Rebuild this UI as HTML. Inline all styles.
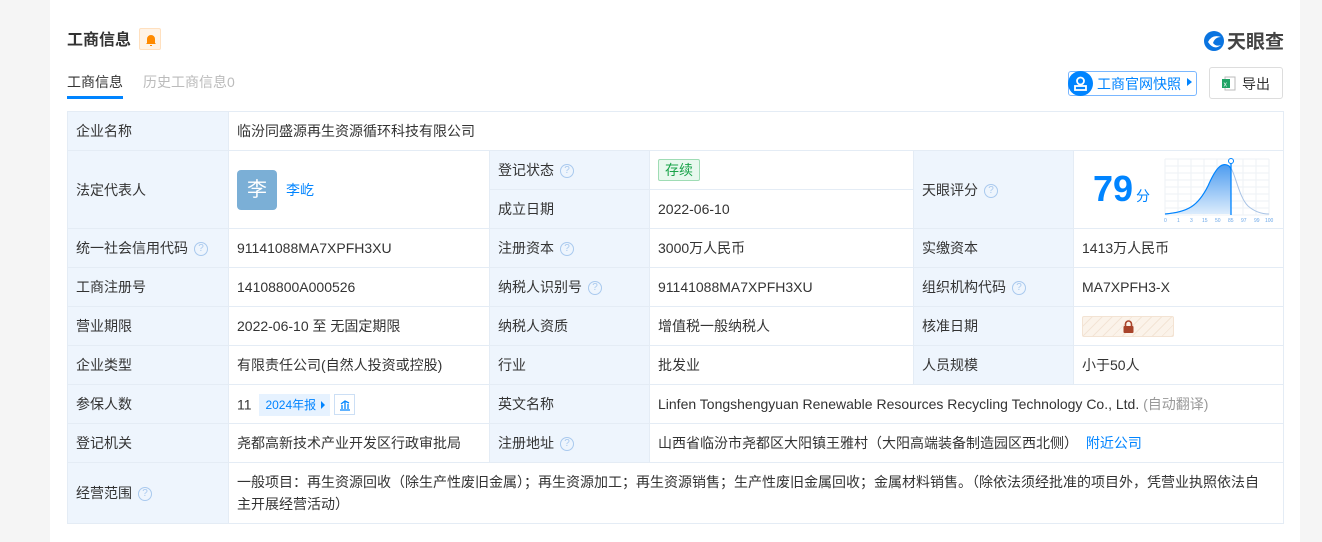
<!DOCTYPE html>
<html><head><meta charset="utf-8">
<style>
*{box-sizing:border-box;margin:0;padding:0}
body{width:1322px;height:542px;background:#f5f5f5;font-family:"Liberation Sans","Noto Sans CJK SC",sans-serif;font-size:14px;color:#333;position:relative;overflow:hidden}
.card{position:absolute;left:50px;top:0;width:1250px;height:542px;background:#fff}
.title{position:absolute;left:67px;top:26px;font-size:16px;font-weight:bold;color:#333}
.bell{position:absolute;left:139px;top:28px;width:22px;height:22px;background:#fff3e6;border:1px solid #ffe0bf;border-radius:2px}
.tab1{position:absolute;left:67px;top:72px;font-size:14px;color:#333}
.tabline{position:absolute;left:67px;top:96px;width:56px;height:3px;background:#0084ff}
.tab2{position:absolute;left:143px;top:72px;color:#bbb}
.logo{position:absolute;left:1203px;top:27px;font-size:19px;font-weight:bold;color:#444;display:flex;align-items:center;gap:2px}
.snap{position:absolute;left:1068px;top:71px;width:129px;height:25px;border:1px solid #7ab7ff;border-radius:3px;color:#0084ff;font-size:14px}
.snap .ic{position:absolute;left:-1px;top:-1px;width:25px;height:25px;border-radius:50%;background:#0084ff}
.exp{position:absolute;left:1209px;top:67px;width:74px;height:32px;border:1px solid #ddd;border-radius:3px;font-size:14px}
table{position:absolute;left:67px;top:111px;width:1216px;border-collapse:collapse;table-layout:fixed}
td{border:1px solid #e4ecf5;padding:0 8px;height:39px;vertical-align:middle;line-height:22px}
td.l{background:#eef5fd;color:#333}
.q{display:inline-block;width:14px;height:14px;border:1px solid #a9c9ee;border-radius:50%;color:#a9c9ee;font-size:10px;line-height:12px;text-align:center;vertical-align:middle;margin-left:6px}
a{color:#0084ff;text-decoration:none}
</style></head><body>
<div class="card"></div>
<div class="title">工商信息</div>
<div class="bell"><svg width="22" height="22" viewBox="0 0 22 22"><path d="M7 14 V10 a4 4 0 0 1 8 0 V14 L16 15 H6 Z M10 16 h2 v1 h-2z" fill="#ff8a00"/></svg></div>
<div class="tab1">工商信息</div><div class="tabline"></div>
<div class="tab2">历史工商信息0</div>
<div class="logo"><svg width="22" height="22" viewBox="0 0 22 22"><circle cx="11" cy="11" r="10" fill="#0a74e0"/><path d="M5 12 q4 -8 13 -5 q-6 0 -8 6 q3 4 8 2 q-7 6 -13 -3z" fill="#fff"/></svg><span>天眼查</span></div>
<div class="snap"><div class="ic"><svg width="25" height="25" viewBox="0 0 25 25"><circle cx="12.5" cy="10" r="3.5" fill="none" stroke="#fff" stroke-width="1.8"/><rect x="7" y="15" width="11" height="4" fill="none" stroke="#fff" stroke-width="1.8"/></svg></div><span style="position:absolute;left:28px;top:2px">工商官网快照</span><span style="position:absolute;right:4px;top:6px;width:0;height:0;border-left:5px solid #0084ff;border-top:4px solid transparent;border-bottom:4px solid transparent"></span></div>
<div class="exp"><svg style="position:absolute;left:12px;top:8px" width="14" height="15" viewBox="0 0 14 15"><rect x="3" y="1" width="10" height="13" fill="#fff" stroke="#bbb"/><rect x="0" y="3" width="8" height="9" fill="#21a366"/><text x="1.5" y="10.5" font-size="7" fill="#fff" font-family="Liberation Sans">x</text></svg><span style="position:absolute;left:32px;top:6px">导出</span></div>
<table>
<colgroup><col style="width:161px"><col style="width:261px"><col style="width:160px"><col style="width:264px"><col style="width:160px"><col style="width:210px"></colgroup>
<tr><td class="l">企业名称</td><td colspan="5">临汾同盛源再生资源循环科技有限公司</td></tr>
<tr><td class="l" rowspan="2">法定代表人</td><td rowspan="2"><span style="display:inline-block;width:40px;height:40px;background:#7bafd6;border-radius:4px;color:#fff;font-size:20px;text-align:center;line-height:40px;vertical-align:middle">李</span><a style="margin-left:9px;vertical-align:middle">李屹</a></td><td class="l">登记状态<span class="q">?</span></td><td><span style="display:inline-block;border:1px solid #9fdcb4;background:#e8f8ee;color:#1aa34a;padding:0 6px;line-height:20px;border-radius:2px">存续</span></td><td class="l" rowspan="2">天眼评分<span class="q">?</span></td><td rowspan="2" style="position:relative"><span style="position:absolute;left:19px;top:18px;font-size:36px;font-weight:bold;color:#0084ff;line-height:40px">79</span><span style="position:absolute;left:62px;top:34px;font-size:14px;color:#0084ff">分</span>
<svg style="position:absolute;left:89px;top:5px" width="112" height="68" viewBox="0 0 112 68"><defs><linearGradient id="g" x1="0" y1="0" x2="0" y2="1"><stop offset="0" stop-color="#4d9cf0"/><stop offset="1" stop-color="#dcecfc"/></linearGradient></defs>
<g stroke="#eef2f6" stroke-width="1"><path d="M2 3H106M2 10H106M2 17H106M2 24H106M2 31H106M2 38H106M2 45H106M2 52H106M2 59H106M2 3V59M15 3V59M28 3V59M41 3V59M54 3V59M67 3V59M80 3V59M93 3V59M106 3V59"/></g>
<path d="M2 58 C25 56 35 50 45 30 C52 14 58 5 66 10 C68 12 68 14 68 14 V58Z" fill="url(#g)"/>
<path d="M2 58 C25 56 35 50 45 30 C52 14 58 5 66 10 C72 14 75 40 85 50 C92 56 100 58 106 58" fill="none" stroke="#a9c4e6"/>
<path d="M2 58 C25 56 35 50 45 30 C52 14 58 5 66 10 C68 12 68 14 68 14" fill="none" stroke="#0084ff" stroke-width="1.2"/>
<line x1="68" y1="6" x2="68" y2="59" stroke="#0084ff" stroke-width="1.3"/><circle cx="68" cy="5" r="2.5" fill="#fff" stroke="#0084ff"/>
<g font-size="5" fill="#6aa7e8" font-family="Liberation Sans"><text x="1" y="66">0</text><text x="14" y="66">1</text><text x="27" y="66">3</text><text x="39" y="66">15</text><text x="52" y="66">50</text><text x="65" y="66">85</text><text x="78" y="66">97</text><text x="91" y="66">99</text><text x="102" y="66">100</text></g></svg></td></tr>
<tr><td class="l">成立日期</td><td>2022-06-10</td></tr>
<tr><td class="l">统一社会信用代码<span class="q">?</span></td><td>91141088MA7XPFH3XU</td><td class="l">注册资本<span class="q">?</span></td><td>3000万人民币</td><td class="l">实缴资本</td><td>1413万人民币</td></tr>
<tr><td class="l">工商注册号</td><td>14108800A000526</td><td class="l">纳税人识别号<span class="q">?</span></td><td>91141088MA7XPFH3XU</td><td class="l">组织机构代码<span class="q">?</span></td><td>MA7XPFH3-X</td></tr>
<tr><td class="l">营业期限</td><td>2022-06-10 至 无固定期限</td><td class="l">纳税人资质</td><td>增值税一般纳税人</td><td class="l">核准日期</td><td><span style="display:inline-block;width:92px;height:21px;vertical-align:middle;border:1px solid #f3e3d3;border-radius:2px;background:repeating-linear-gradient(135deg,#fbf3ea 0 6px,#f3e4d5 6px 7px);position:relative"><svg style="position:absolute;left:39px;top:3px" width="13" height="13" viewBox="0 0 13 13"><path d="M3.5 6V4a3 3 0 0 1 6 0v2" fill="none" stroke="#a8432a" stroke-width="1.6"/><rect x="1.5" y="6" width="10" height="7" rx="1" fill="#a8432a"/></svg></span></td></tr>
<tr><td class="l">企业类型</td><td>有限责任公司(自然人投资或控股)</td><td class="l">行业</td><td>批发业</td><td class="l">人员规模</td><td>小于50人</td></tr>
<tr><td class="l">参保人数</td><td><span style="vertical-align:middle">11</span> <span style="display:inline-block;background:#e6f2ff;color:#0084ff;font-size:12px;padding:0 14px 0 6px;line-height:22px;margin-left:4px;position:relative;vertical-align:middle">2024年报<span style="position:absolute;right:5px;top:7px;border-left:4px solid #0084ff;border-top:4px solid transparent;border-bottom:4px solid transparent"></span></span><span style="display:inline-block;width:21px;height:21px;border:1px solid #ccdff5;margin-left:4px;vertical-align:middle;position:relative"><svg style="position:absolute;left:4px;top:4px" width="12" height="12" viewBox="0 0 12 12"><path d="M1 11H11M3 10V6M6 10V3M9 10V5M2 5L6 2L10 4" fill="none" stroke="#0084ff" stroke-width="1.3"/></svg></span></td><td class="l">英文名称</td><td colspan="3">Linfen Tongshengyuan Renewable Resources Recycling Technology Co., Ltd. <span style="color:#999">(自动翻译)</span></td></tr>
<tr><td class="l">登记机关</td><td>尧都高新技术产业开发区行政审批局</td><td class="l">注册地址<span class="q">?</span></td><td colspan="3">山西省临汾市尧都区大阳镇王雅村（大阳高端装备制造园区西北侧） <a style="margin-left:4px">附近公司</a></td></tr>
<tr><td class="l" style="height:61px">经营范围<span class="q">?</span></td><td colspan="5" style="line-height:22px;padding-right:4px;white-space:nowrap;overflow:hidden">一般项目：再生资源回收（除生产性废旧金属）；再生资源加工；再生资源销售；生产性废旧金属回收；金属材料销售。（除依法须经批准的项目外，凭营业执照依法自<br>主开展经营活动）</td></tr>
</table>
</body></html>
